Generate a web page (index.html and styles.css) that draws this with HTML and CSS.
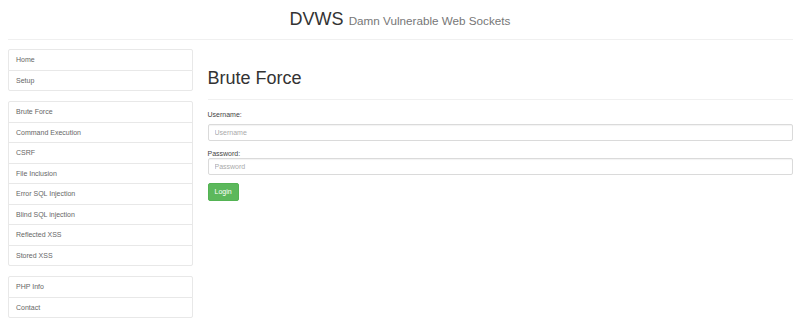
FILE: index.html
```html
<!DOCTYPE html>
<html lang="en">
<head>
    <meta charset="UTF-8">
    <meta name="viewport" content="width=device-width, initial-scale=1.0">
    <title>DVWS - Brute Force</title>
    <link rel="stylesheet" href="styles.css">
</head>
<body>
    <div class="page-top">
        <h1>DVWS <small>Damn Vulnerable Web Sockets</small></h1>
    </div>

    <div class="layout">
        <div class="sidebar">
            <div class="list-group">
                <a class="list-group-item" href="#">Home</a>
                <a class="list-group-item" href="#">Setup</a>
            </div>
            <div class="list-group">
                <a class="list-group-item" href="#">Brute Force</a>
                <a class="list-group-item" href="#">Command Execution</a>
                <a class="list-group-item" href="#">CSRF</a>
                <a class="list-group-item" href="#">File Inclusion</a>
                <a class="list-group-item" href="#">Error SQL Injection</a>
                <a class="list-group-item" href="#">Blind SQL injection</a>
                <a class="list-group-item" href="#">Reflected XSS</a>
                <a class="list-group-item" href="#">Stored XSS</a>
            </div>
            <div class="list-group">
                <a class="list-group-item" href="#">PHP Info</a>
                <a class="list-group-item" href="#">Contact</a>
            </div>
        </div>

        <div class="main">
            <div class="page-header">
                <h1>Brute Force</h1>
            </div>
            <form onsubmit="return false;">
                <div class="form-group">
                    <label class="field-label" for="username">Username:</label>
                    <input type="text" id="username" class="form-control" placeholder="Username">
                </div>
                <div class="form-group">
                    <label class="field-label tight" for="password">Password:</label>
                    <input type="password" id="password" class="form-control" placeholder="Password">
                </div>
                <button type="submit" class="btn-success">Login</button>
            </form>
        </div>
    </div>
</body>
</html>
```

FILE: styles.css
```css
body {
    font-family: "Liberation Sans", Arial, Helvetica, sans-serif;
    font-size: 7px;
    line-height: 10px;
    color: #444;
    margin: 0;
    background-color: #fff;
}
h1 {
    font-size: 18px;
    line-height: 19.8px;
    font-weight: normal;
    margin: 0;
    color: #333;
}
.page-top {
    margin: 0 7.5px;
    padding-top: 10px;
    padding-bottom: 8.5px;
    border-bottom: 1px solid #f0f0f0;
    text-align: center;
}
.page-top small {
    font-size: 11.7px;
    color: #777;
}
.layout {
    display: grid;
    grid-template-columns: 185px 1fr;
    gap: 15px;
    padding: 0 7.5px;
    margin-top: 9px;
}
.list-group {
    display: flex;
    flex-direction: column;
    margin-bottom: 10px;
}
.list-group-item {
    display: block;
    padding: 4.75px 7.5px;
    line-height: 10px;
    margin-bottom: -1px;
    border: 1px solid #e8e8e8;
    background-color: #fff;
    color: #666;
    text-decoration: none;
}
.list-group-item:first-child {
    border-radius: 2px 2px 0 0;
}
.list-group-item:last-child {
    border-radius: 0 0 2px 2px;
    margin-bottom: 0;
}
.page-header {
    margin-top: 20px;
    padding-bottom: 9.5px;
    border-bottom: 1px solid #f0f0f0;
    margin-bottom: 11px;
}
.field-label {
    display: block;
    line-height: 8px;
    margin-bottom: 5px;
}
.field-label.tight {
    margin-bottom: 0;
}
.form-group {
    margin-bottom: 9.5px;
}
.form-control {
    display: block;
    width: 100%;
    height: 17px;
    box-sizing: border-box;
    padding: 3px 6px;
    font-family: inherit;
    font-size: 7px;
    color: #555;
    border: 1px solid #dadada;
    border-radius: 2px;
    box-shadow: inset 0 1px 1px rgba(0, 0, 0, 0.05);
    margin: 0;
}
.form-control::placeholder {
    color: #aaa;
}
.btn-success {
    font-family: inherit;
    font-size: 7px;
    line-height: 10px;
    padding: 3px 6px;
    margin-top: -2px;
    color: #fff;
    background-color: #5cb85c;
    border: 1px solid #53b353;
    border-radius: 2px;
    cursor: pointer;
}
```
